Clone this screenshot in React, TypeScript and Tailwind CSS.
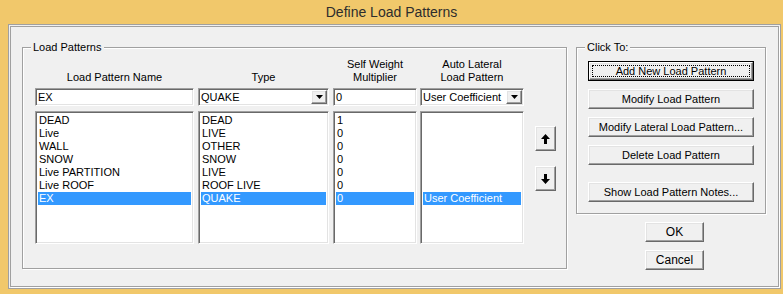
import React from "react"

const rows = [
    { name: "DEAD", type: "DEAD", sw: "1", auto: "" },
    { name: "Live", type: "LIVE", sw: "0", auto: "" },
    { name: "WALL", type: "OTHER", sw: "0", auto: "" },
    { name: "SNOW", type: "SNOW", sw: "0", auto: "" },
    { name: "Live PARTITION", type: "LIVE", sw: "0", auto: "" },
    { name: "Live ROOF", type: "ROOF LIVE", sw: "0", auto: "" },
    { name: "EX", type: "QUAKE", sw: "0", auto: "User Coefficient" },
]
const selected = 6

const sunken = "bg-white border border-[#a0a0a0] border-r-white border-b-white shadow-[inset_1px_1px_0_#696969,inset_-1px_-1px_0_#e3e3e3]"
const raised = "bg-[#f0f0f0] border border-t-white border-l-white border-r-[#696969] border-b-[#696969] shadow-[inset_-1px_-1px_0_#a0a0a0,inset_1px_1px_0_#e3e3e3]"

function Group({ label, className, children }: { label: string; className: string; children: React.ReactNode }) {
    return (
        <div className={`relative border border-[#a0a0a0] shadow-[inset_1px_1px_0_#fff,1px_1px_0_#fff] ${className}`}>
            <span className="absolute -top-[7px] left-[8px] bg-[#f0f0f0] px-[2px] leading-[13px]">{label}</span>
            {children}
        </div>
    )
}

function DropArrow() {
    return (
        <div className={`${raised} w-[16px] h-[14px] flex items-center justify-center`}>
            <svg width="7" height="4" viewBox="0 0 7 4"><polygon points="0,0 7,0 3.5,4" fill="#000" /></svg>
        </div>
    )
}

function Combo({ value, w }: { value: string; w: string }) {
    return (
        <div className={`${sunken} ${w} h-[18px] flex items-center justify-between pl-[2px] pr-[1px]`}>
            <span className="leading-[13px]">{value}</span>
            <DropArrow />
        </div>
    )
}

function List({ w, field }: { w: string; field: "name" | "type" | "sw" | "auto" }) {
    return (
        <div className={`${sunken} ${w} h-[133px] p-[2px]`}>
            {rows.map((r, i) => (
                <div key={i} className={`h-[13px] leading-[13px] pl-[1px] whitespace-nowrap ${i === selected ? "bg-[#3399ff] text-white" : ""}`}>
                    {r[field]}
                </div>
            ))}
        </div>
    )
}

function Btn({ label, isDefault }: { label: string; isDefault?: boolean }) {
    if (isDefault) {
        return (
            <div className="w-[166px] h-[20px] border border-black">
                <div className={`${raised} w-full h-full flex items-center justify-center`}>
                    <div className="w-[158px] h-[12px] border border-dotted border-black flex items-center justify-center leading-[13px]">{label}</div>
                </div>
            </div>
        )
    }
    return <div className={`${raised} w-[166px] h-[20px] flex items-center justify-center leading-[13px]`}>{label}</div>
}

function ArrowBtn({ up }: { up?: boolean }) {
    return (
        <div className={`${raised} w-[21px] h-[25px] flex items-center justify-center`}>
            <svg width="9" height="10" viewBox="0 0 9 10">
                {up
                    ? <polygon points="4.5,0 9,5 6,5 6,10 3,10 3,5 0,5" fill="#000" />
                    : <polygon points="4.5,10 9,5 6,5 6,0 3,0 3,5 0,5" fill="#000" />}
            </svg>
        </div>
    )
}

export default function App() {
    return (
        <div className="w-[783px] h-[294px] bg-[#f1c86b] font-['Liberation_Sans',Arial,sans-serif] text-[11px] text-black overflow-hidden">
            <div className="h-[24px] flex items-center justify-center text-[14px] text-[#2d2d2d]">Define Load Patterns</div>
            <div className="ml-[8px] w-[773px] h-[265px] bg-[#f0f0f0] border border-[#a0a0a0] p-[1px]">
                <div className="h-[261px] border border-[#a0a0a0] shadow-[1px_1px_0_#fff] flex pl-[11px] pt-[20px]">
                    {/* Load Patterns */}
                    <Group label="Load Patterns" className="w-[545px] h-[222px] pl-[12px] pt-[10px]">
                        <div className="flex items-end h-[26px] text-center leading-[13px]">
                            <div className="w-[159px]">Load Pattern Name</div>
                            <div className="w-[131px] ml-[4px]">Type</div>
                            <div className="w-[84px] ml-[4px]">Self Weight<br />Multiplier</div>
                            <div className="w-[104px] ml-[3px]">Auto Lateral<br />Load Pattern</div>
                        </div>
                        <div className="flex mt-[4px]">
                            <div className={`${sunken} w-[159px] h-[18px] pl-[2px] flex items-center leading-[13px]`}>EX</div>
                            <Combo value="QUAKE" w="w-[131px] ml-[4px]" />
                            <div className={`${sunken} w-[84px] ml-[4px] h-[18px] pl-[2px] flex items-center leading-[13px]`}>0</div>
                            <Combo value="User Coefficient" w="w-[104px] ml-[3px]" />
                        </div>
                        <div className="flex mt-[5px]">
                            <List w="w-[159px]" field="name" />
                            <List w="w-[131px] ml-[4px]" field="type" />
                            <List w="w-[84px] ml-[4px]" field="sw" />
                            <List w="w-[104px] ml-[3px]" field="auto" />
                            <div className="ml-[11px] pt-[15px] flex flex-col gap-[15px]">
                                <ArrowBtn up />
                                <ArrowBtn />
                            </div>
                        </div>
                    </Group>

                    {/* Click To */}
                    <div className="ml-[9px]">
                        <Group label="Click To:" className="w-[190px] h-[167px] pl-[11px] pt-[13px]">
                            <div className="flex flex-col gap-[8px]">
                                <Btn label="Add New Load Pattern" isDefault />
                                <Btn label="Modify Load Pattern" />
                                <Btn label="Modify Lateral Load Pattern..." />
                                <Btn label="Delete Load Pattern" />
                            </div>
                            <div className="mt-[17px]">
                                <Btn label="Show Load Pattern Notes..." />
                            </div>
                        </Group>
                        <div className="ml-[69px] mt-[8px] flex flex-col gap-[8px]">
                            <div className={`${raised} w-[59px] h-[20px] flex items-center justify-center text-[12px]`}>OK</div>
                            <div className={`${raised} w-[59px] h-[20px] flex items-center justify-center text-[12px]`}>Cancel</div>
                        </div>
                    </div>
                </div>
            </div>
        </div>
    )
}
